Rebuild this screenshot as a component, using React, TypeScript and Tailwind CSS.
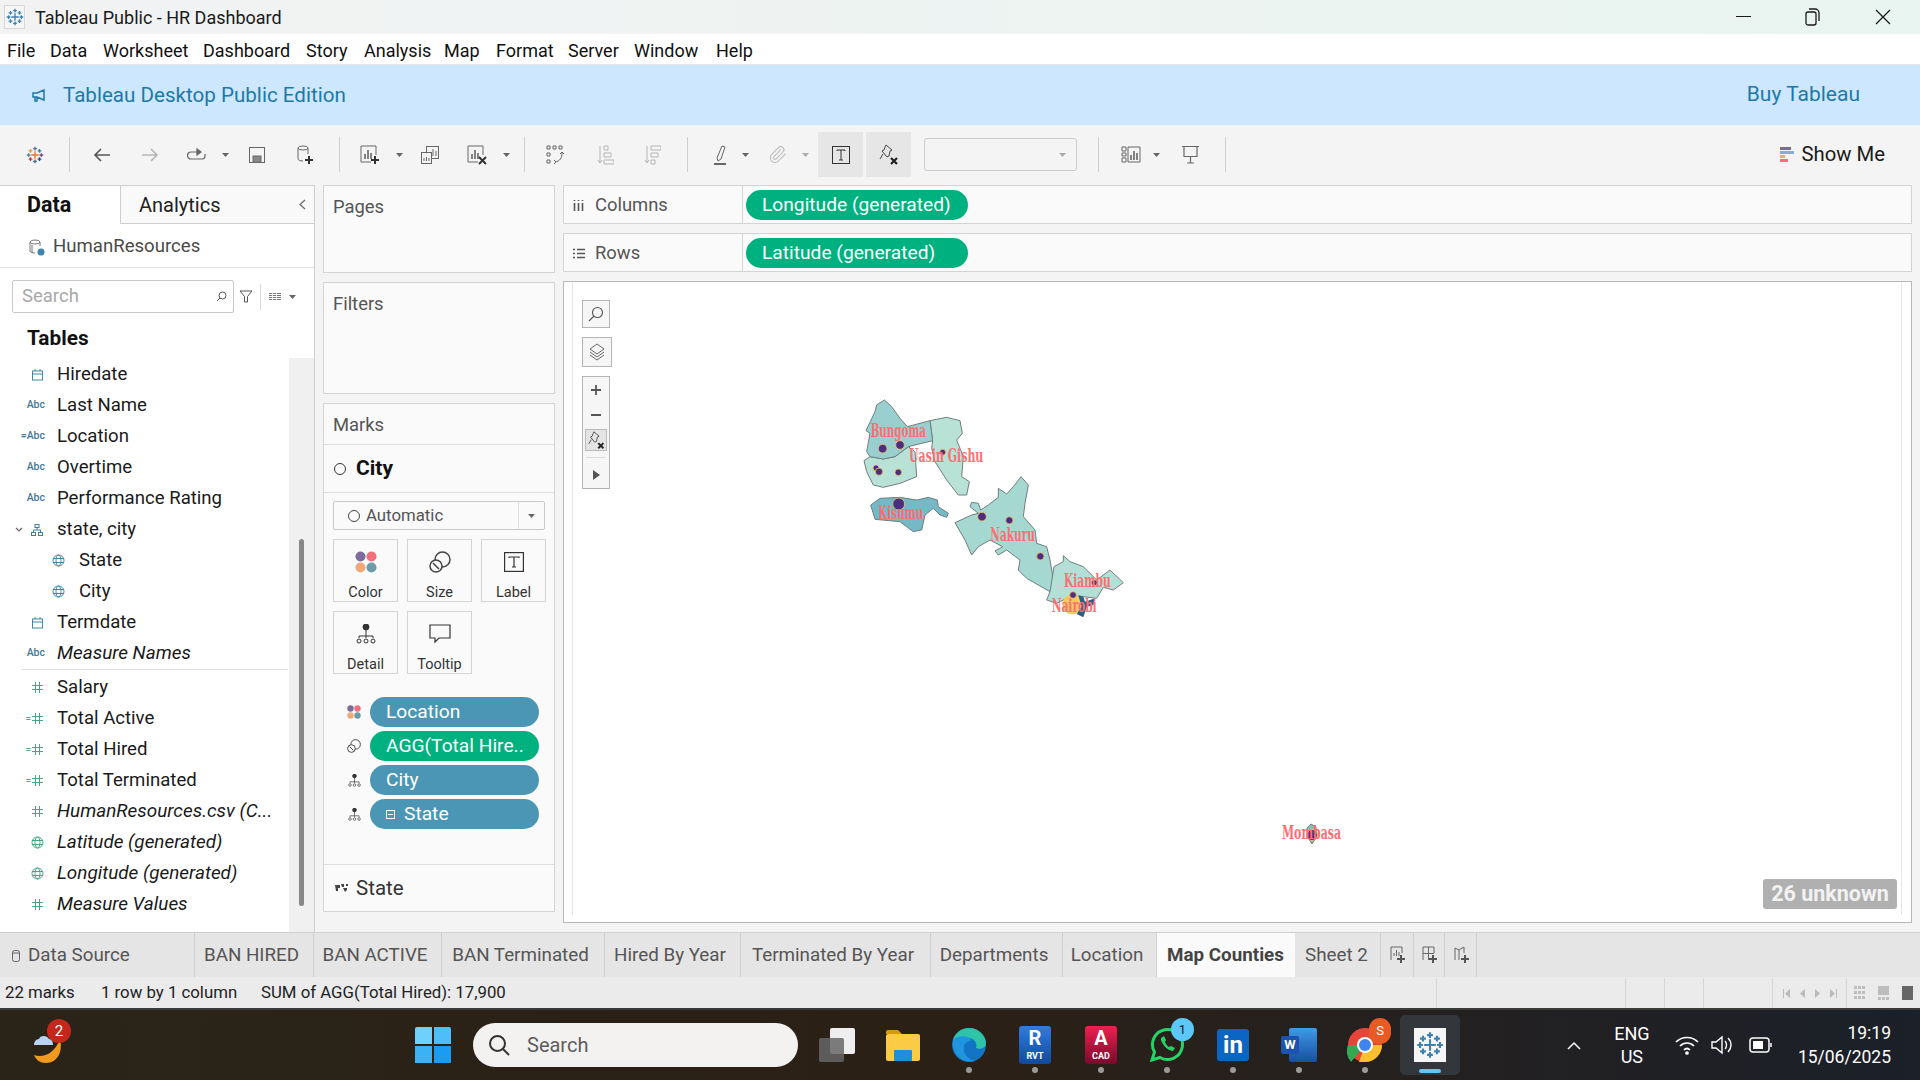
import type { ReactNode } from "react";
import { Paperclip } from "lucide-react";

const MENU = [
  ["File", "w-[43px]"],
  ["Data", "w-[53px]"],
  ["Worksheet", "w-[100px]"],
  ["Dashboard", "w-[103px]"],
  ["Story", "w-[58px]"],
  ["Analysis", "w-[80px]"],
  ["Map", "w-[52px]"],
  ["Format", "w-[72px]"],
  ["Server", "w-[66px]"],
  ["Window", "w-[82px]"],
  ["Help", "w-[50px]"],
];

const DIMS = [
  { kind: "date", name: "Hiredate" },
  { kind: "abc", name: "Last Name" },
  { kind: "calcabc", name: "Location" },
  { kind: "abc", name: "Overtime" },
  { kind: "abc", name: "Performance Rating" },
  { kind: "tree", name: "state, city" },
  { kind: "globe", name: "State", indent: true },
  { kind: "globe", name: "City", indent: true },
  { kind: "date", name: "Termdate" },
  { kind: "abc", name: "Measure Names", italic: true },
];

const MEASURES = [
  { kind: "num", name: "Salary" },
  { kind: "calcnum", name: "Total Active" },
  { kind: "calcnum", name: "Total Hired" },
  { kind: "calcnum", name: "Total Terminated" },
  { kind: "num", name: "HumanResources.csv (C...", italic: true },
  { kind: "globeg", name: "Latitude (generated)", italic: true },
  { kind: "globeg", name: "Longitude (generated)", italic: true },
  { kind: "num", name: "Measure Values", italic: true },
];

const TABS = [
  ["BAN HIRED", "w-[119px]"],
  ["BAN ACTIVE", "w-[128px]"],
  ["BAN Terminated", "w-[163px]"],
  ["Hired By Year", "w-[136px]"],
  ["Terminated By Year", "w-[190px]"],
  ["Departments", "w-[132px]"],
  ["Location", "w-[94px]"],
];

function Globe({ color }: { color: string }) {
  return (
    <svg width="13" height="13" viewBox="0 0 13 13" fill="none" stroke={color} strokeWidth="1">
      <circle cx="6.5" cy="6.5" r="5.5" />
      <ellipse cx="6.5" cy="6.5" rx="2.5" ry="5.5" />
      <path d="M1 4.5h11M1 8.5h11" />
    </svg>
  );
}

function Hash() {
  return (
    <svg width="11" height="11" viewBox="0 0 11 11" stroke="#4aa583" strokeWidth="1">
      <path d="M3.5 0v11M7.5 0v11M0 3.5h11M0 7.5h11" />
    </svg>
  );
}

function FieldIcon({ kind }: { kind: string }) {
  if (kind === "abc" || kind === "calcabc")
    return (
      <span className="text-[10.5px] font-medium text-[#44789a] leading-none [font-family:Roboto,sans-serif]">
        {kind === "calcabc" ? "=" : ""}Abc
      </span>
    );
  if (kind === "date")
    return (
      <svg className="mr-[2px]" width="11" height="12" viewBox="0 0 11 12" fill="none" stroke="#3f86a8" strokeWidth="1">
        <rect x="0.5" y="2" width="10" height="9" />
        <path d="M0.5 5h10M3 0v2M8 0v2" />
      </svg>
    );
  if (kind === "tree")
    return (
      <svg className="mr-[2px]" width="12" height="12" viewBox="0 0 12 12" fill="none" stroke="#3f7f9e" strokeWidth="1">
        <rect x="4" y="0.5" width="4" height="3" />
        <rect x="0.5" y="8.5" width="4" height="3" />
        <rect x="7.5" y="8.5" width="4" height="3" />
        <path d="M6 3.5V6M2.5 8.5V6h7v2.5" />
      </svg>
    );
  if (kind === "globe") return <Globe color="#3f86a8" />;
  if (kind === "globeg") return <span className="mr-[1px]"><Globe color="#4aa583" /></span>;
  return (
    <span className="flex items-center gap-[1px] mr-[2px]">
      {kind === "calcnum" && <span className="text-[10px] leading-none text-[#4aa583]">=</span>}
      <Hash />
    </span>
  );
}

function FieldRow({ kind, name, italic, indent }: { kind: string; name: string; italic?: boolean; indent?: boolean }) {
  return (
    <div className="relative flex items-center h-[31px]">
      <div className={`flex justify-end shrink-0 ${indent ? "w-[65px]" : "w-[45px]"}`}>
        <FieldIcon kind={kind} />
      </div>
      {kind === "tree" && (
        <svg className="absolute left-[15px] top-[13px]" width="8" height="6" viewBox="0 0 8 6" fill="none" stroke="#666" strokeWidth="1.2">
          <path d="M1 1l3 3 3-3" />
        </svg>
      )}
      <span className={`${indent ? "ml-[14px]" : "ml-[12px]"} text-[#1a1a1a] whitespace-nowrap ${italic ? "italic text-[18.9px]" : "text-[18.6px]"}`}>
        {name}
      </span>
    </div>
  );
}

function Caret({ light }: { light?: boolean }) {
  return (
    <svg width="7" height="4" viewBox="0 0 7 4">
      <path d="M0 0h7L3.5 4z" fill={light ? "#aaa" : "#666"} />
    </svg>
  );
}

function Sep() {
  return <div className="w-px h-[35px] bg-[#cfcfcf]" />;
}

function Tool({ w, children }: { w: string; children?: ReactNode }) {
  return <div className={`${w} h-full flex items-center justify-center shrink-0`}>{children}</div>;
}

function Plus({ cx, cy, s, c }: { cx: number; cy: number; s: number; c: string }) {
  return (
    <path
      d={`M${cx - s} ${cy}h${s * 2}M${cx} ${cy - s}v${s * 2}`}
      stroke={c}
      strokeWidth="1.800"
      fill="none"
    />
  );
}

function TableauLogo({ size, mono }: { size: number; mono?: boolean }) {
  const c = (x: string) => (mono ? "#3b82b0" : x);
  return (
    <svg width={size} height={size} viewBox="0 0 24 24">
      <Plus cx={12} cy={12} s={5} c={c("#e8762b")} />
      <Plus cx={12} cy={3.5} s={2.5} c={c("#5b6fa8")} />
      <Plus cx={12} cy={20.5} s={2.5} c={c("#4a6a96")} />
      <Plus cx={3.5} cy={12} s={2.5} c={c("#59879b")} />
      <Plus cx={20.5} cy={12} s={2.5} c={c("#7b4f91")} />
      <Plus cx={6} cy={6.5} s={2.5} c={c("#e0a13a")} />
      <Plus cx={18} cy={6.5} s={2.5} c={c("#2f8a8d")} />
      <Plus cx={6} cy={17.5} s={2.5} c={c("#c8303f")} />
      <Plus cx={18} cy={17.5} s={2.5} c={c("#1f4e79")} />
    </svg>
  );
}

function PinX({ size = 22 }: { size?: number }) {
  return (
    <svg width={size} height={size} viewBox="0 0 22 22" fill="none">
      <path d="M8 1l6 5-2 1-1 5-2 1-5-6 2-1 1-3z M5 10l-3 5" stroke="#444" strokeWidth="1" />
      <path d="M13 14l6 6M19 14l-6 6" stroke="#222" strokeWidth="2.2" />
    </svg>
  );
}

function Toolbar() {
  const s = "#666";
  return (
    <div className="h-[60px] bg-[#f4f4f4] flex items-center pl-[15px] pr-[35px] pt-[7px] pb-[8px] shrink-0">
      <Tool w="w-[40px]"><TableauLogo size={18} /></Tool>
      <Tool w="w-[28px]"><Sep /></Tool>
      <Tool w="w-[38px]">
        <svg width="18" height="14" viewBox="0 0 18 14" fill="none" stroke="#555" strokeWidth="1.6"><path d="M17 7H2M8 1L2 7l6 6" /></svg>
      </Tool>
      <Tool w="w-[58px]">
        <svg width="18" height="14" viewBox="0 0 18 14" fill="none" stroke="#b5b5b5" strokeWidth="1.6"><path d="M1 7h15M10 1l6 6-6 6" /></svg>
      </Tool>
      <Tool w="w-[34px]">
        <svg width="19" height="14" viewBox="0 0 19 14" fill="none" stroke={s} strokeWidth="1.2"><path d="M12 4H4a3 3 0 0 0 0 7h11a3 3 0 0 0 3-3V6" /><path d="M10 1l4 3-4 3z" fill={s} /></svg>
      </Tool>
      <Tool w="w-[24px]"><Caret /></Tool>
      <Tool w="w-[40px]">
        <svg width="16" height="16" viewBox="0 0 16 16" fill="none" stroke={s} strokeWidth="1"><rect x="0.5" y="0.5" width="15" height="15" /><rect x="4" y="9" width="8" height="6.5" fill="#888" /></svg>
      </Tool>
      <Tool w="w-[56px]">
        <svg width="16" height="20" viewBox="0 0 16 20" fill="none" stroke={s} strokeWidth="1"><ellipse cx="6" cy="3" rx="5" ry="2" /><path d="M1 3v11c0 1 2 2 5 2M11 3v6" /><path d="M12 11v8M8 15h8" stroke="#333" strokeWidth="2" /></svg>
      </Tool>
      <Tool w="w-[12px]"><Sep /></Tool>
      <Tool w="w-[50px]">
        <svg width="20" height="20" viewBox="0 0 20 20" fill="none" stroke={s} strokeWidth="1"><path d="M11 17H1V1h15v9" /><path d="M5 14V9M8 14V5M11 14V8" strokeWidth="1.6" /><path d="M15 11v8M11 15h8" stroke="#333" strokeWidth="2" /></svg>
      </Tool>
      <Tool w="w-[8px]"><Caret /></Tool>
      <Tool w="w-[54px]">
        <svg width="18" height="18" viewBox="0 0 18 18" fill="none" stroke={s} strokeWidth="1"><rect x="5.5" y="0.5" width="12" height="12" fill="#f4f4f4" /><path d="M9 10V6M12 10V3M15 10V5" /><rect x="0.5" y="6.5" width="10" height="11" fill="#f4f4f4" /><path d="M3 15v-3M5.5 15v-4M8 15v-3" /></svg>
      </Tool>
      <Tool w="w-[40px]">
        <svg width="20" height="20" viewBox="0 0 20 20" fill="none" stroke={s} strokeWidth="1"><path d="M11 17H1V1h15v9" /><path d="M5 14V9M8 14V5M11 14V8" strokeWidth="1.6" /><path d="M12 12l7 7M19 12l-7 7" stroke="#333" strokeWidth="2" /></svg>
      </Tool>
      <Tool w="w-[18px]"><Caret /></Tool>
      <Tool w="w-[18px]"><Sep /></Tool>
      <Tool w="w-[44px]">
        <svg width="18" height="20" viewBox="0 0 18 20" fill="none" stroke={s} strokeWidth="1"><path d="M1 1h3v3H1zM7 1h3v3H7zM13 1h3v3h-3zM1 8h3v3H1zM1 15h3v3H1z" /><path d="M16 8c0 5-2 8-7 9" /><path d="M14 9l2-2 2 2M8 15l2 2-2 2" /></svg>
      </Tool>
      <Tool w="w-[56px]">
        <svg width="17" height="20" viewBox="0 0 17 20" fill="none" stroke="#b5b5b5" strokeWidth="1"><path d="M3 1v17M1 15l2 3 2-3" /><path d="M7 1h4v4H7zM7 8h7v4H7zM7 15h10v4H7z" /></svg>
      </Tool>
      <Tool w="w-[38px]">
        <svg width="17" height="20" viewBox="0 0 17 20" fill="none" stroke="#b5b5b5" strokeWidth="1"><path d="M3 1v17M1 15l2 3 2-3" /><path d="M7 1h10v4H7zM7 8h7v4H7zM7 15h4v4H7z" /></svg>
      </Tool>
      <Tool w="w-[32px]"><Sep /></Tool>
      <Tool w="w-[34px]">
        <svg width="14" height="20" viewBox="0 0 14 20" fill="none" stroke={s} strokeWidth="1"><path d="M4 13L9 1l3 1-4 12-3 2z" /><path d="M1 19h12" strokeWidth="2" /></svg>
      </Tool>
      <Tool w="w-[16px]"><Caret /></Tool>
      <Tool w="w-[48px]">
        <Paperclip size={19} color="#b8b8b8" strokeWidth={1.3} />
      </Tool>
      <Tool w="w-[8px]"><Caret light /></Tool>
      <div className="w-[45px] h-[45px] ml-[9px] bg-[#e6e6e6] flex items-center justify-center shrink-0">
        <svg width="18" height="18" viewBox="0 0 18 18" fill="none" stroke="#333" strokeWidth="1"><rect x="0.5" y="0.5" width="17" height="17" /><path d="M5 5V4h8v1M9 4v10M7 14h4" /></svg>
      </div>
      <div className="w-[45px] h-[45px] ml-[3px] bg-[#e6e6e6] flex items-center justify-center shrink-0"><PinX /></div>
      <div className="w-[153px] h-[33px] ml-[13px] border border-[#cccccc] rounded-[3px] flex items-center justify-end pr-[10px] shrink-0"><Caret light /></div>
      <Tool w="w-[42px]"><Sep /></Tool>
      <Tool w="w-[24px]">
        <svg width="20" height="17" viewBox="0 0 20 17" fill="none" stroke={s} strokeWidth="1"><path d="M1 1h4v4H1zM1 7h4v3H1zM1 12h4v4H1zM7 1h12v15H7z" /><path d="M10 14V9M13 14V5M16 14V7" strokeWidth="1.6" /></svg>
      </Tool>
      <Tool w="w-[26px]"><Caret /></Tool>
      <Tool w="w-[42px]">
        <svg width="17" height="19" viewBox="0 0 17 19" fill="none" stroke={s} strokeWidth="1.2"><path d="M0 1.500h17M2 1.500v10h13v-10M8.500 11.500V18M5 18h7" /></svg>
      </Tool>
      <Tool w="w-[28px]"><Sep /></Tool>
      <div className="ml-auto flex items-center gap-[7px]">
        <svg width="14" height="15" viewBox="0 0 14 15">
          <rect width="11" height="3" fill="#7a6a9a" />
          <rect y="4" width="14" height="3" fill="#8aaed0" />
          <rect y="8" width="5" height="3" fill="#f0a878" />
          <rect y="12" width="8" height="3" fill="#f46e7c" />
        </svg>
        <span className="text-[20.300px] text-[#1a1a1a]">Show Me</span>
      </div>
    </div>
  );
}

function MarkBtn({ label, children }: { label: string; children: ReactNode }) {
  return (
    <div className="w-[65px] h-[63px] border border-[#d4d4d4] flex flex-col items-center pt-[10px] shrink-0">
      <div className="h-[24px] flex items-center">{children}</div>
      <span className="text-[14.500px] mt-[12px] text-[#333] leading-none">{label}</span>
    </div>
  );
}

function Dots({ size }: { size: number }) {
  return (
    <svg width={size} height={size} viewBox="0 0 22 22">
      <circle cx="5.500" cy="5.500" r="5" fill="#7d6c9b" />
      <circle cx="16.500" cy="5.500" r="5" fill="#f46e7c" />
      <circle cx="5.500" cy="16.500" r="5" fill="#f0a878" />
      <circle cx="16.500" cy="16.500" r="5" fill="#6d9ba8" />
    </svg>
  );
}

function SizeIcon({ size }: { size: number }) {
  return (
    <svg width={size} height={size} viewBox="0 0 22 22" fill="none" stroke="#444" strokeWidth="1.500">
      <circle cx="13.500" cy="8.500" r="7.500" />
      <circle cx="7" cy="15" r="6" fill="#fafafa" />
      <path d="M4 12l6 6" />
    </svg>
  );
}

function DetailIcon({ size }: { size: number }) {
  return (
    <svg width={size} height={size} viewBox="0 0 20 20" fill="none" stroke="#333" strokeWidth="1">
      <circle cx="10" cy="3" r="3" fill="#333" />
      <path d="M10 6v6M3 14v-2h14v2M10 12v2" />
      <circle cx="3" cy="17" r="2" />
      <circle cx="10" cy="17" r="2" />
      <circle cx="17" cy="17" r="2" />
    </svg>
  );
}

function Pill({ color, icon, children }: { color: string; icon: ReactNode; children: ReactNode }) {
  return (
    <div className="flex items-center h-[30px] mb-[4px]">
      <div className="w-[46px] flex justify-center pl-[14px] shrink-0">{icon}</div>
      <div className={`w-[169px] h-[30px] rounded-full ${color} flex items-center pl-[16px] pt-[1px] text-white text-[19.200px] whitespace-nowrap overflow-hidden`}>
        {children}
      </div>
    </div>
  );
}

function MapShapes() {
  return (
    <svg className="absolute left-[286px] top-[108px] overflow-visible" width="300" height="240" viewBox="0 0 900 720">
      <g stroke="#6f7f7f" strokeWidth="3" strokeLinejoin="round">
        <path fill="#b9e2d7" d="M240,92 L290,82 L330,92 L337,130 L320,150 L340,200 L335,260 L358,275 L350,315 L325,315 L290,270 L255,215 L245,175 L248,152 Z" />
        <path fill="#b9e2d7" d="M42,212 L60,200 L100,207 L135,200 L175,170 L195,185 L200,260 L150,280 L100,292 L70,285 L50,245 Z" />
        <path fill="#99cfcf" d="M103,30 L125,50 L150,85 L172,110 L240,92 L248,152 L175,170 L135,200 L100,207 L60,200 L50,185 L60,130 L48,122 L75,65 L80,45 Z" />
        <path fill="#75b8c6" d="M62,345 L90,325 L150,322 L200,330 L235,322 L262,330 L265,350 L295,370 L290,382 L270,375 L250,355 L225,375 L215,420 L190,425 L150,395 L75,388 Z" />
        <path fill="#a6d8d2" d="M315,398 L365,375 L385,370 L360,350 L365,337 L385,340 L392,360 L415,345 L445,322 L445,295 L470,312 L490,290 L513,260 L535,285 L525,340 L520,380 L555,420 L560,460 L590,470 L600,510 L612,580 L600,605 L530,565 L505,540 L510,510 L470,480 L445,495 L435,483 L458,470 L420,450 L385,470 L365,495 L345,450 Z" />
        <path fill="#b2e0d7" d="M600,605 L612,530 L640,515 L640,497 L660,515 L700,530 L740,570 L780,540 L820,578 L790,600 L760,592 L740,625 L700,620 L660,620 L620,640 L590,630 Z" />
      </g>
      <circle cx="667" cy="643" r="30" fill="#fbc85f" />
      <path d="M685,615 L700,620 L705,635 L735,625 L730,645 L710,650 L700,682 L680,672 L695,650 Z" fill="#2f5c85" />
      <g fill="#4b2e7e" stroke="#f0c36b" strokeWidth="2.500">
        <circle cx="98" cy="176" r="13" />
        <circle cx="150" cy="165" r="13" />
        <circle cx="278" cy="187" r="9" />
        <circle cx="78" cy="234" r="9" />
        <circle cx="87" cy="245" r="11" />
        <circle cx="145" cy="247" r="10" />
        <circle cx="146" cy="342" r="18" />
        <circle cx="396" cy="380" r="13" />
        <circle cx="478" cy="391" r="11" />
        <circle cx="571" cy="499" r="11" />
        <circle cx="733" cy="578" r="9" />
        <circle cx="669" cy="615" r="10" />
      </g>
      <g fill="#fb6f74" fontFamily="'DejaVu Serif', serif" fontWeight="700" fontSize="56">
        <text x="62" y="140" textLength="166" lengthAdjust="spacingAndGlyphs">Bungoma</text>
        <text x="177" y="215" textLength="223" lengthAdjust="spacingAndGlyphs">Uasin Gishu</text>
        <text x="85" y="387" textLength="135" lengthAdjust="spacingAndGlyphs">Kisumu</text>
        <text x="421" y="453" textLength="134" lengthAdjust="spacingAndGlyphs">Nakuru</text>
        <text x="642" y="590" textLength="140" lengthAdjust="spacingAndGlyphs">Kiambu</text>
        <text x="605" y="665" textLength="135" lengthAdjust="spacingAndGlyphs">Nairobi</text>
      </g>
    </svg>
  );
}

function Mombasa() {
  return (
    <svg className="absolute left-[716px] top-[536px] overflow-visible" width="70" height="34" viewBox="0 0 70 34">
      <path d="M27 10l4-4 5 3 1 9-5 8-3-5z" fill="#8fbcb8" stroke="#6f7f7f" />
      <circle cx="32" cy="17" r="5.500" fill="#4b2e7e" stroke="#f0c36b" />
      <text x="2" y="21" textLength="59" lengthAdjust="spacingAndGlyphs" fill="#fb6f74" fontFamily="'DejaVu Serif', serif" fontWeight="700" fontSize="19">
        Mombasa
      </text>
    </svg>
  );
}

function MapControls() {
  return (
    <div className="absolute left-[18px] top-[18px] flex flex-col items-start">
      <div className="w-[28px] h-[28px] border border-[#b5b5b5] bg-[#f6f6f6] flex items-center justify-center">
        <svg width="16" height="16" viewBox="0 0 16 16" fill="none" stroke="#555" strokeWidth="1.1"><circle cx="9.500" cy="6.500" r="5" /><path d="M6 10l-5 5" /></svg>
      </div>
      <div className="w-[30px] h-[30px] mt-[9px] border border-[#b5b5b5] bg-[#f6f6f6] flex items-center justify-center">
        <svg width="16" height="18" viewBox="0 0 16 18" fill="none" stroke="#666" strokeWidth="1"><path d="M8 1l7 5-7 5-7-5zM1 9l7 5 7-5M1 12l7 5 7-5" /></svg>
      </div>
      <div className="w-[28px] h-[113px] mt-[9px] border border-[#b5b5b5] bg-[#f6f6f6] flex flex-col items-center pt-[7px]">
        <svg width="12" height="12" viewBox="0 0 12 12" stroke="#555" strokeWidth="1.8"><path d="M6 1v10M1 6h10" /></svg>
        <svg className="mt-[18px]" width="12" height="2" viewBox="0 0 12 2" stroke="#555" strokeWidth="2"><path d="M1 1h10" /></svg>
        <div className="w-[22px] h-[22px] mt-[13px] bg-[#e4e4e4] border border-[#bbb] flex items-center justify-center shrink-0"><PinX size={19} /></div>
        <div className="w-[20px] h-px bg-[#dcdcdc] mt-[6px]" />
        <svg className="mt-[12px]" width="7" height="10" viewBox="0 0 7 10"><path d="M0 0l7 5-7 5z" fill="#555" /></svg>
      </div>
    </div>
  );
}

function TaskIcon({ children, dot }: { children: ReactNode; dot?: boolean }) {
  return (
    <div className="relative w-[66px] h-[70px] flex items-center justify-center shrink-0">
      {children}
      {dot && <div className="absolute bottom-[7px] left-[30px] w-[6px] h-[6px] rounded-full bg-[#9a9a9a]" />}
    </div>
  );
}

function Taskbar() {
  return (
    <div className="h-[72px] bg-gradient-to-r from-[#2a2418] via-[#2b2016] to-[#1b2029] flex items-center border-t-2 border-[#3a3a38] shrink-0">
      <div className="relative w-[415px] h-full shrink-0">
        <svg className="absolute left-[30px] top-[15px]" width="40" height="42" viewBox="0 0 40 42">
          <path d="M30 14c3 12-2 24-14 24-6 0-10-3-12-8 8 3 20 0 26-16z" fill="#f09a20" />
          <path d="M4 20c0-4 3-6 5-6 1-4 8-4 10 0 3 0 4 3 4 6z" fill="#b9d4f2" />
        </svg>
        <div className="absolute left-[47px] top-[9px] w-[24px] h-[24px] rounded-full bg-[#c4281c] text-white text-[15px] flex items-center justify-center">2</div>
      </div>
      <div className="grid grid-cols-2 gap-[2px] w-[36px] h-[36px] shrink-0">
        <div className="bg-[#6fd0fb] rounded-tl-[2px]" />
        <div className="bg-[#4fbdf7] rounded-tr-[2px]" />
        <div className="bg-[#3cb2f5]" />
        <div className="bg-[#1a9cf3]" />
      </div>
      <div className="w-[325px] h-[44px] ml-[22px] rounded-full bg-[#f3f2f1] flex items-center pl-[15px] shrink-0">
        <svg width="22" height="22" viewBox="0 0 22 22" fill="none" stroke="#333" strokeWidth="2"><circle cx="9.500" cy="9.500" r="7.500" /><path d="M15 15l6 6" /></svg>
        <span className="ml-[17px] text-[20px] text-[#5d5d5d]">Search</span>
      </div>
      <div className="flex items-center ml-[6px]">
        <TaskIcon>
          <svg width="38" height="36" viewBox="0 0 38 36"><rect x="12" y="1" width="25" height="26" rx="2" fill="#eee" /><rect x="1" y="11" width="25" height="24" rx="2" fill="#666" fillOpacity="0.85" /></svg>
        </TaskIcon>
        <TaskIcon>
          <svg width="36" height="34" viewBox="0 0 36 34"><path d="M1 4a2 2 0 0 1 2-2h10l4 4h-16z" fill="#d39a0e" /><rect x="1" y="6" width="34" height="27" rx="2" fill="#fbcb45" /><rect x="9" y="22" width="18" height="11" rx="1" fill="#1f8fd8" /></svg>
        </TaskIcon>
        <TaskIcon dot>
          <svg width="36" height="36" viewBox="0 0 36 36">
            <circle cx="18" cy="18" r="17" fill="#1274c4" />
            <path d="M2 13C4 6 10 1 18 1c10 0 17 8 17 15 0 5-6 7-10 5 2-5-2-10-8-10-6 0-12 1-15 2z" fill="#2fc4a8" />
            <path d="M2 13C8 7 20 9 20 14c-5 0-8 4-7 10 1 5 6 9 11 10C12 37 0 28 2 13z" fill="#1f95e0" />
          </svg>
        </TaskIcon>
        <TaskIcon dot>
          <div className="w-[32px] h-[38px] rounded-[3px] bg-gradient-to-b from-[#2f7ce0] to-[#124a9c] flex flex-col items-center text-white font-bold">
            <span className="text-[20px] leading-[24px]">R</span>
            <span className="text-[9px] leading-[12px]">RVT</span>
          </div>
        </TaskIcon>
        <TaskIcon dot>
          <div className="w-[32px] h-[38px] rounded-[3px] bg-gradient-to-b from-[#f02050] to-[#7a0a2c] flex flex-col items-center text-white font-bold">
            <span className="text-[20px] leading-[24px]">A</span>
            <span className="text-[9px] leading-[12px]">CAD</span>
          </div>
        </TaskIcon>
        <TaskIcon dot>
          <svg width="36" height="36" viewBox="0 0 36 36" fill="none">
            <path d="M3 33l2.500-8A15 15 0 1 1 11 30.500z" stroke="#25d366" strokeWidth="3" />
            <path d="M12 11c-1 4 6 13 12 13l2-3-4-2-2 1c-2-1-3-3-4-5l1-2-2-4z" fill="#25d366" />
          </svg>
          <div className="absolute left-[37px] top-[8px] w-[23px] h-[23px] rounded-full bg-[#5cc8fa] text-[#1b1b1b] text-[13px] flex items-center justify-center">1</div>
        </TaskIcon>
        <TaskIcon dot>
          <div className="w-[32px] h-[32px] rounded-[3px] bg-[#0a66c2] text-white text-[24px] font-bold flex items-center justify-center leading-none">in</div>
        </TaskIcon>
        <TaskIcon dot>
          <div className="relative w-[36px] h-[34px]">
            <div className="absolute right-0 top-0 w-[28px] h-[34px] rounded-[2px] bg-gradient-to-b from-[#3f9be8] to-[#1a4ea0]" />
            <div className="absolute left-0 top-[8px] w-[18px] h-[18px] rounded-[2px] bg-[#1d52b0] text-white text-[13px] font-bold flex items-center justify-center">W</div>
          </div>
        </TaskIcon>
        <TaskIcon dot>
          <svg width="36" height="36" viewBox="0 0 36 36">
            <circle cx="18" cy="18" r="17" fill="#e8453a" />
            <path d="M18 18L4 35A17 17 0 0 1 1 18z" fill="#35a853" />
            <path d="M18 18l17 0a17 17 0 0 1-17 17l-6 0z" fill="#fbc02d" />
            <circle cx="18" cy="18" r="8" fill="#fff" />
            <circle cx="18" cy="18" r="6" fill="#3f83ee" />
          </svg>
          <div className="absolute left-[37px] top-[8px] w-[22px] h-[26px] rounded-full bg-[#e85b24] text-white text-[13px] flex items-center justify-center">S</div>
        </TaskIcon>
        <div className="relative w-[60px] h-[60px] ml-[2px] rounded-[5px] bg-[#33363a] flex items-center justify-center shrink-0">
          <div className="w-[32px] h-[34px] bg-[#f6f6f6] flex items-center justify-center">
            <TableauLogo size={28} mono />
          </div>
          <div className="absolute bottom-[2px] left-[19px] w-[22px] h-[4px] rounded-full bg-[#5cc8fa]" />
        </div>
      </div>
      <div className="ml-auto flex items-center text-white pr-[29px]">
        <svg width="14" height="9" viewBox="0 0 14 9" fill="none" stroke="#fff" strokeWidth="1.5"><path d="M1 8l6-6 6 6" /></svg>
        <div className="w-[60px] ml-[21px] flex flex-col items-center text-[18px] leading-[23px]">
          <span>ENG</span>
          <span>US</span>
        </div>
        <svg className="ml-[13px]" width="24" height="20" viewBox="0 0 24 20" fill="none" stroke="#fff" strokeWidth="1.7"><path d="M1 7c6-6 16-6 22 0M5 11c4-4 10-4 14 0M9 15c2-2 4-2 6 0" /><circle cx="12" cy="18" r="1" fill="#fff" /></svg>
        <svg className="ml-[12px]" width="22" height="20" viewBox="0 0 22 20" fill="none" stroke="#fff" strokeWidth="1.4"><path d="M1 7h4l6-5v16l-6-5H1z" /><path d="M14 6c2 2 2 6 0 8M17 3c4 4 4 10 0 14" /></svg>
        <svg className="ml-[16px]" width="24" height="16" viewBox="0 0 24 16" fill="none" stroke="#fff" strokeWidth="1.5"><rect x="1" y="1" width="19" height="14" rx="3" /><rect x="4" y="4" width="10" height="8" fill="#fff" stroke="none" /><path d="M22 6v4" /></svg>
        <div className="ml-[25px] flex flex-col items-end text-[17.500px] leading-[24px]">
          <span>19:19</span>
          <span>15/06/2025</span>
        </div>
      </div>
    </div>
  );
}

export default function App() {
  return (
    <div className="w-[1920px] h-[1080px] flex flex-col overflow-hidden bg-[#f4f4f4] [font-family:Roboto,'Liberation_Sans',sans-serif] text-[#333]">
      <div className="h-[33px] bg-gradient-to-r from-[#f2f2f3] to-[#e9f5f1] flex items-center relative shrink-0">
        <div className="ml-[4px] w-[21px] h-[24px] bg-[#f7f7f7] border border-[#d8d8d8] flex items-center justify-center">
          <TableauLogo size={18} mono />
        </div>
        <span className="ml-[10px] pt-[2px] text-[18px] text-[#1a1a1a]">Tableau Public - HR Dashboard</span>
        <div className="ml-auto flex items-center pr-[29px]">
          <div className="w-[15px] h-px bg-[#1a1a1a]" />
          <svg className="ml-[54px]" width="15" height="18" viewBox="0 0 15 18" fill="none" stroke="#1a1a1a" strokeWidth="1.3"><rect x="1" y="4" width="10" height="13" rx="2" /><path d="M4 1h6a4 4 0 0 1 4 4v8" /></svg>
          <svg className="ml-[55px]" width="16" height="16" viewBox="0 0 16 16" stroke="#1a1a1a" strokeWidth="1.3"><path d="M1 1l14 14M15 1L1 15" /></svg>
        </div>
      </div>
      <div className="h-[31px] bg-white flex items-center pl-[7px] pt-[2px] border-b border-[#e6e6e6] mt-px shrink-0">
        {MENU.map(([m, w]) => (
          <span key={m} className={`${w} text-[18px] text-[#111] shrink-0`}>{m}</span>
        ))}
      </div>
      <div className="h-[60px] bg-[#cde8fe] flex items-center shrink-0 text-[#2178a8]">
        <svg className="ml-[32px]" width="13" height="13" viewBox="0 0 13 13" fill="none" stroke="#2178a8" strokeWidth="1.5"><path d="M1 4h4l7-3v10L5 8H1zM3 8v4h2V8" /></svg>
        <span className="ml-[18px] text-[20.600px]">Tableau Desktop Public Edition</span>
        <span className="ml-auto mr-[60px] text-[21px]">Buy Tableau</span>
      </div>
      <Toolbar />

      <div className="flex h-[747px] shrink-0">
        <div className="w-[315px] shrink-0 bg-white border-r border-[#cfcfcf] border-t flex flex-col">
          <div className="flex h-[38px] shrink-0">
            <div className="w-[120px] flex items-center pl-[27px] text-[21.500px] font-bold text-[#111]">Data</div>
            <div className="flex-1 flex items-center pl-[18px] text-[20px] bg-[#f9f9f9] border-l border-b border-[#cfcfcf] text-[#222]">
              Analytics
              <svg className="ml-auto mr-[8px]" width="7" height="11" viewBox="0 0 7 11" fill="none" stroke="#666" strokeWidth="1.2"><path d="M6 1L1 5.500 6 10" /></svg>
            </div>
          </div>
          <div className="h-[44px] flex items-center pl-[29px] pt-[3px] border-b border-[#e0e0e0] shrink-0">
            <svg width="16" height="17" viewBox="0 0 16 17" fill="none" stroke="#777" strokeWidth="1"><ellipse cx="6" cy="3" rx="5" ry="2" /><path d="M1 3v9c0 1 2 2 5 2M11 3v4M3 6v8" /><circle cx="12" cy="13" r="3.500" fill="#3f86a8" stroke="none" /></svg>
            <span className="ml-[8px] text-[18.600px] text-[#4a4a4a]">HumanResources</span>
          </div>
          <div className="flex items-center h-[33px] mt-[12px] pl-[12px] shrink-0">
            <div className="w-[222px] h-[33px] border border-[#c8c8c8] rounded-[2px] flex items-center pl-[9px] pr-[6px] text-[18.500px] text-[#a8a8a8]">
              Search
              <svg className="ml-auto" width="11" height="11" viewBox="0 0 11 11" fill="none" stroke="#555" strokeWidth="1"><circle cx="6.500" cy="4.500" r="3.500" /><path d="M4 7l-3 3" /></svg>
            </div>
            <svg className="ml-[5px]" width="14" height="13" viewBox="0 0 14 13" fill="none" stroke="#555" strokeWidth="1"><path d="M1 1h12L8.500 6.500V12h-3V6.500z" /></svg>
            <div className="w-px h-[26px] bg-[#dcdcdc] ml-[7px]" />
            <svg className="ml-[8px]" width="12" height="9" viewBox="0 0 12 9" stroke="#777" strokeWidth="1">
              <path d="M0 1.500h12M0 3.500h12M0 5.500h12M0 7.500h12" />
              <path d="M3.500 0v9M7.500 0v9" stroke="#fff" strokeWidth="0.800" />
            </svg>
            <div className="ml-[8px]"><Caret /></div>
          </div>
          <div className="relative flex-1">
            <div className="absolute right-0 top-[45px] bottom-0 w-[25px] bg-[#f0f0f0]">
              <div className="absolute left-[10px] top-[181px] h-[367px] w-[5px] rounded-full bg-[#888]" />
            </div>
            <div className="h-[46px] pl-[27px] pt-[13px] text-[20.800px] font-bold text-[#111] leading-[24px]">Tables</div>
            {DIMS.map((f) => (
              <FieldRow key={f.name} {...f} />
            ))}
            <div className="ml-[22px] w-[266px] h-px bg-[#e0e0e0]" />
            <div className="mt-[2px]">
              {MEASURES.map((f) => (
                <FieldRow key={f.name} {...f} />
              ))}
            </div>
          </div>
        </div>

        <div className="w-[232px] ml-[8px] shrink-0 flex flex-col">
          <div className="h-[88px] border border-[#d4d4d4] bg-[#fafafa] px-[9px] py-[9px] text-[18.400px] text-[#555] leading-[24px] shrink-0">Pages</div>
          <div className="h-[112px] mt-[9px] border border-[#d4d4d4] bg-[#fafafa] px-[9px] py-[9px] text-[18.400px] text-[#555] leading-[24px] shrink-0">Filters</div>
          <div className="h-[509px] mt-[9px] border border-[#d4d4d4] bg-[#fafafa] flex flex-col shrink-0">
            <div className="h-[41px] flex items-center pl-[9px] pt-[2px] text-[18.400px] text-[#555] border-b border-[#dedede] shrink-0">Marks</div>
            <div className="h-[48px] flex items-center pl-[10px] pt-[1px] border-b border-[#dedede] shrink-0">
              <div className="w-[12px] h-[12px] rounded-full border-[1.5px] border-[#333]" />
              <span className="ml-[10px] text-[21px] font-bold text-[#111]">City</span>
            </div>
            <div className="mt-[8px] ml-[9px] w-[212px] h-[29px] border border-[#c8c8c8] rounded-[2px] flex items-center pl-[14px] text-[16.800px] text-[#555] shrink-0">
              <div className="w-[12px] h-[12px] rounded-full border-[1.5px] border-[#444]" />
              <span className="ml-[6px]">Automatic</span>
              <div className="ml-auto w-[26px] h-full border-l border-[#dedede] flex items-center justify-center"><Caret /></div>
            </div>
            <div className="mt-[9px] ml-[9px] flex gap-[9px]">
              <MarkBtn label="Color"><Dots size={22} /></MarkBtn>
              <MarkBtn label="Size"><SizeIcon size={22} /></MarkBtn>
              <MarkBtn label="Label">
                <svg width="20" height="20" viewBox="0 0 20 20" fill="none" stroke="#333" strokeWidth="1.2"><rect x="0.600" y="0.600" width="18.800" height="18.800" /><path d="M5 6V5h10v1M10 5v10M8 15h4" /></svg>
              </MarkBtn>
            </div>
            <div className="mt-[9px] ml-[9px] flex gap-[9px]">
              <MarkBtn label="Detail"><DetailIcon size={20} /></MarkBtn>
              <MarkBtn label="Tooltip">
                <svg width="22" height="20" viewBox="0 0 22 20" fill="none" stroke="#333" strokeWidth="1.2"><path d="M1 1h20v13H10l-4 4v-4H1z" /></svg>
              </MarkBtn>
            </div>
            <div className="mt-[23px]">
              <Pill color="bg-[#4c96b5]" icon={<Dots size={14} />}>Location</Pill>
              <Pill color="bg-[#00b180]" icon={<SizeIcon size={14} />}>AGG(Total Hire..</Pill>
              <Pill color="bg-[#4c96b5]" icon={<DetailIcon size={13} />}>City</Pill>
              <Pill color="bg-[#4c96b5]" icon={<DetailIcon size={13} />}>
                <svg className="mr-[9px]" width="9" height="9" viewBox="0 0 9 9" fill="none" stroke="#fff"><rect x="0.500" y="0.500" width="8" height="8" /><path d="M2 4.500h5" /></svg>
                State
              </Pill>
            </div>
            <div className="mt-[31px] border-t border-[#dedede] flex-1 flex items-center pl-[11px]">
              <svg width="13" height="8" viewBox="0 0 13 8"><path d="M0 1h5v3H3v3H1zM6 0h3v3H7zM8 4h4v2l-2 2zM11 0h2v2h-2z" fill="#444" /></svg>
              <span className="ml-[8px] text-[20.500px] text-[#333]">State</span>
            </div>
          </div>
        </div>

        <div className="flex-1 ml-[8px] mr-[8px] flex flex-col min-w-0">
          <div className="h-[39px] border border-[#d4d4d4] bg-[#fafafa] flex items-center shrink-0">
            <div className="w-[179px] h-full flex items-center pl-[9px] pt-[1px] border-r border-[#d4d4d4] text-[18.400px] text-[#555] shrink-0">
              <svg width="11" height="12" viewBox="0 0 11 12" stroke="#555" strokeWidth="1.600"><path d="M1.500 1v1M5.500 1v1M9.500 1v1M1.500 4v8M5.500 4v8M9.500 4v8" /></svg>
              <span className="ml-[11px]">Columns</span>
            </div>
            <div className="ml-[3px] w-[222px] h-[30px] rounded-full bg-[#00b180] text-white text-[19.200px] flex items-center pl-[16px] pt-[2px] whitespace-nowrap">Longitude (generated)</div>
          </div>
          <div className="h-[39px] mt-[9px] border border-[#d4d4d4] bg-[#fafafa] flex items-center shrink-0">
            <div className="w-[179px] h-full flex items-center pl-[9px] pt-[1px] border-r border-[#d4d4d4] text-[18.400px] text-[#555] shrink-0">
              <svg width="12" height="11" viewBox="0 0 12 11" stroke="#555" strokeWidth="1.400"><path d="M0 1.500h2M4 1.500h8M0 5.500h2M4 5.500h8M0 9.500h2M4 9.500h8" /></svg>
              <span className="ml-[10px]">Rows</span>
            </div>
            <div className="ml-[3px] w-[222px] h-[30px] rounded-full bg-[#00b180] text-white text-[19.200px] flex items-center pl-[16px] pt-[2px] whitespace-nowrap">Latitude (generated)</div>
          </div>
          <div className="relative h-[642px] mt-[9px] border border-[#b8b8b8] bg-white shrink-0">
            <div className="absolute left-[8px] top-0 bottom-[7px] w-px bg-[#e6e6e6]" />
            <div className="absolute right-[9px] top-0 bottom-[7px] w-px bg-[#e6e6e6]" />
            <MapControls />
            <MapShapes />
            <Mombasa />
            <div className="absolute right-[14px] bottom-[13px] w-[134px] h-[30px] pt-[1px] rounded-[3px] bg-[#b0b0b0] text-[#f2f2f2] text-[21.500px] font-bold flex items-center justify-center whitespace-nowrap">26 unknown</div>
          </div>
        </div>
      </div>

      <div className="h-[45px] bg-[#e5e5e5] border-t border-[#cfcfcf] flex text-[18.800px] text-[#555] pt-0 shrink-0">
        <div className="w-[195px] flex items-center pl-[12px] pt-[1px] border-r border-[#cfcfcf] shrink-0">
          <svg width="8" height="12" viewBox="0 0 8 12" fill="none" stroke="#666"><rect x="0.500" y="0.500" width="7" height="11" rx="2" /><path d="M0.500 3h7" /></svg>
          <span className="ml-[8px]">Data Source</span>
        </div>
        {TABS.map(([t, w]) => (
          <div key={t} className={`${w} flex items-center justify-center pr-[5px] pt-[1px] border-r border-[#cfcfcf] shrink-0 whitespace-nowrap`}>{t}</div>
        ))}
        <div className="w-[138px] bg-[#fafafa] flex items-center justify-center pr-[1px] pt-[1px] font-bold text-[#444] shrink-0 whitespace-nowrap">Map Counties</div>
        <div className="w-[86px] flex items-center justify-center pr-[2px] pt-[1px] border-r border-[#cfcfcf] shrink-0">Sheet 2</div>
        {[
          ["M2 14V1h11v6M5 10V7M7.500 10V4M10 10V6", "w-[33px]"],
          ["M2 14V1h11v6M2 7.500h11M7.500 1v13", "w-[31px]"],
          ["M2 14V2l4 2 5-3v6M6 4v10", "w-[32px]"],
        ].map(([d, w]) => (
          <div key={d} className={`${w} flex items-center justify-center pl-[2px] border-r border-[#cfcfcf] shrink-0`}>
            <svg width="18" height="18" viewBox="0 0 18 18" fill="none" stroke="#666" strokeWidth="1">
              <path d={d} />
              <path d="M12 9v8M8 13h8" stroke="#555" strokeWidth="2" />
            </svg>
          </div>
        ))}
      </div>

      <div className="h-[31px] bg-[#ebebeb] flex items-center pt-[1px] text-[16.800px] text-[#222] shrink-0">
        <span className="ml-[5px] w-[96px]">22 marks</span>
        <span className="w-[160px]">1 row by 1 column</span>
        <span>SUM of AGG(Total Hired): 17,900</span>
        <div className="ml-auto flex h-full shrink-0">
          <div className="w-[189px] border-l border-[#d6d6d6]" />
          <div className="w-[39px] border-l border-[#d6d6d6]" />
          <div className="w-[39px] border-l border-[#d6d6d6]" />
          <div className="w-[69px] border-l border-[#d6d6d6]" />
          <div className="w-[74px] border-l border-[#d6d6d6] flex items-center justify-center gap-[10px]">
            <svg width="7" height="9" viewBox="0 0 7 9"><path d="M0 0h1v9H0zM7 0v9L2 4.500z" fill="#bbb" /></svg>
            <svg width="5" height="9" viewBox="0 0 5 9"><path d="M5 0v9L0 4.500z" fill="#bbb" /></svg>
            <svg width="5" height="9" viewBox="0 0 5 9"><path d="M0 0v9l5-4.500z" fill="#bbb" /></svg>
            <svg width="7" height="9" viewBox="0 0 7 9"><path d="M7 0H6v9h1zM0 0v9l5-4.500z" fill="#bbb" /></svg>
          </div>
          <div className="w-[74px] border-l border-[#d6d6d6] flex items-center justify-center gap-[13px]">
            <svg width="11" height="14" viewBox="0 0 11 14" fill="#bdbdbd"><path d="M0 0h3v3H0zM4 0h3v3H4zM8 0h3v3H8zM0 5h3v3H0zM4 5h3v3H4zM8 5h3v3H8zM0 10h3v3H0zM4 10h3v3H4zM8 10h3v3H8z" /></svg>
            <svg width="11" height="14" viewBox="0 0 11 14" fill="#bdbdbd"><path d="M0 0h11v9H0zM0 11h3v3H0zM4 11h3v3H4zM8 11h3v3H8z" /></svg>
            <div className="w-[11px] h-[14px] bg-[#666]" />
          </div>
        </div>
      </div>
      <Taskbar />
    </div>
  );
}
